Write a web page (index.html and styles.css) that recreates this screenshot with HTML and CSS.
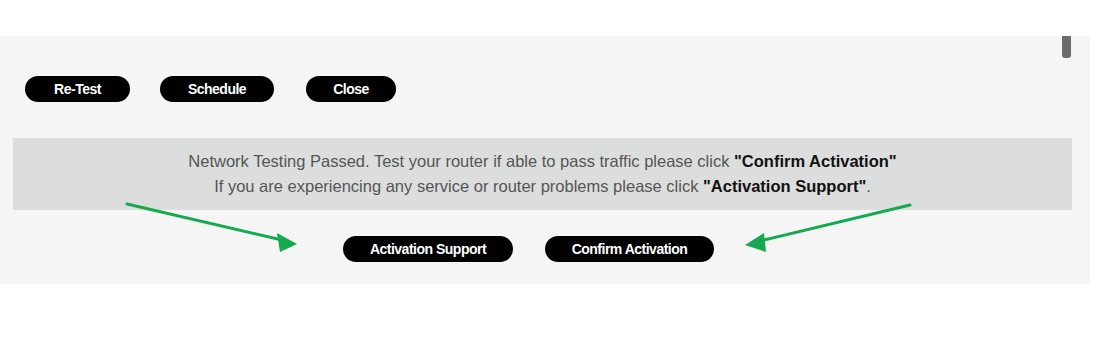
FILE: index.html
```html
<!DOCTYPE html>
<html>
<head>
<meta charset="utf-8">
<link rel="stylesheet" href="styles.css">
</head>
<body>
<div class="page">
  <div class="panel">
    <div class="scroll-thumb"></div>
    <div class="top-actions">
      <button class="pill pill-retest">Re-Test</button>
      <button class="pill pill-schedule">Schedule</button>
      <button class="pill pill-close">Close</button>
    </div>
    <div class="notice">
      <p>Network Testing Passed. Test your router if able to pass traffic please click <b>"Confirm Activation"</b></p>
      <p>If you are experiencing any service or router problems please click <b>"Activation Support"</b>.</p>
    </div>
    <div class="bottom-actions">
      <button class="pill pill-support">Activation Support</button>
      <button class="pill pill-confirm">Confirm Activation</button>
    </div>
    <svg class="arrows" width="1090" height="248" viewBox="0 0 1090 248">
      <g stroke="#17a94f" stroke-width="3" fill="#17a94f" stroke-linecap="round">
        <line x1="127" y1="168" x2="282" y2="204"/>
        <polygon points="297,208 277,197 280,216" stroke="none"/>
        <line x1="910" y1="169" x2="760" y2="205"/>
        <polygon points="745,209 764,197 766,216" stroke="none"/>
      </g>
    </svg>
  </div>
</div>
</body>
</html>
```
FILE: styles.css
```css
html, body {
  margin: 0;
  padding: 0;
  background: #ffffff;
}
.page {
  padding-top: 36px;
  height: 316px;
}
.panel {
  position: relative;
  width: 1090px;
  height: 248px;
  background: #f5f5f5;
  display: flex;
  flex-direction: column;
}
.scroll-thumb {
  position: absolute;
  left: 1062px;
  top: 0;
  width: 9px;
  height: 22px;
  border-radius: 0 0 3px 3px;
  background: #6b6b6b;
}
.pill {
  height: 26px;
  border: none;
  border-radius: 13px;
  background: #000;
  color: #fff;
  font-family: "Liberation Sans", Arial, sans-serif;
  font-weight: bold;
  font-size: 14px;
  letter-spacing: -0.5px;
  padding: 0 0 1px;
  display: flex;
  align-items: center;
  justify-content: center;
}
.top-actions {
  display: flex;
  margin-top: 40px;
  padding-left: 25px;
}
.pill-retest { width: 105px; }
.pill-schedule { width: 114px; margin-left: 30px; }
.pill-close { width: 90px; margin-left: 32px; }
.notice {
  margin: 36px 0 0 13px;
  width: 1059px;
  height: 72px;
  box-sizing: border-box;
  padding-top: 11px;
  background: #dcdedd;
  font-family: "Liberation Sans", Arial, sans-serif;
  font-size: 16.5px;
  line-height: 25px;
  color: #555;
  text-align: center;
}
.notice p {
  margin: 0;
}
.notice b {
  color: #111;
}
.bottom-actions {
  display: flex;
  justify-content: center;
  gap: 32px;
  width: 1057px;
  margin-top: 26px;
}
.pill-support { width: 170px; }
.pill-confirm { width: 169px; }
.arrows {
  position: absolute;
  left: 0;
  top: 0;
  pointer-events: none;
}
```
